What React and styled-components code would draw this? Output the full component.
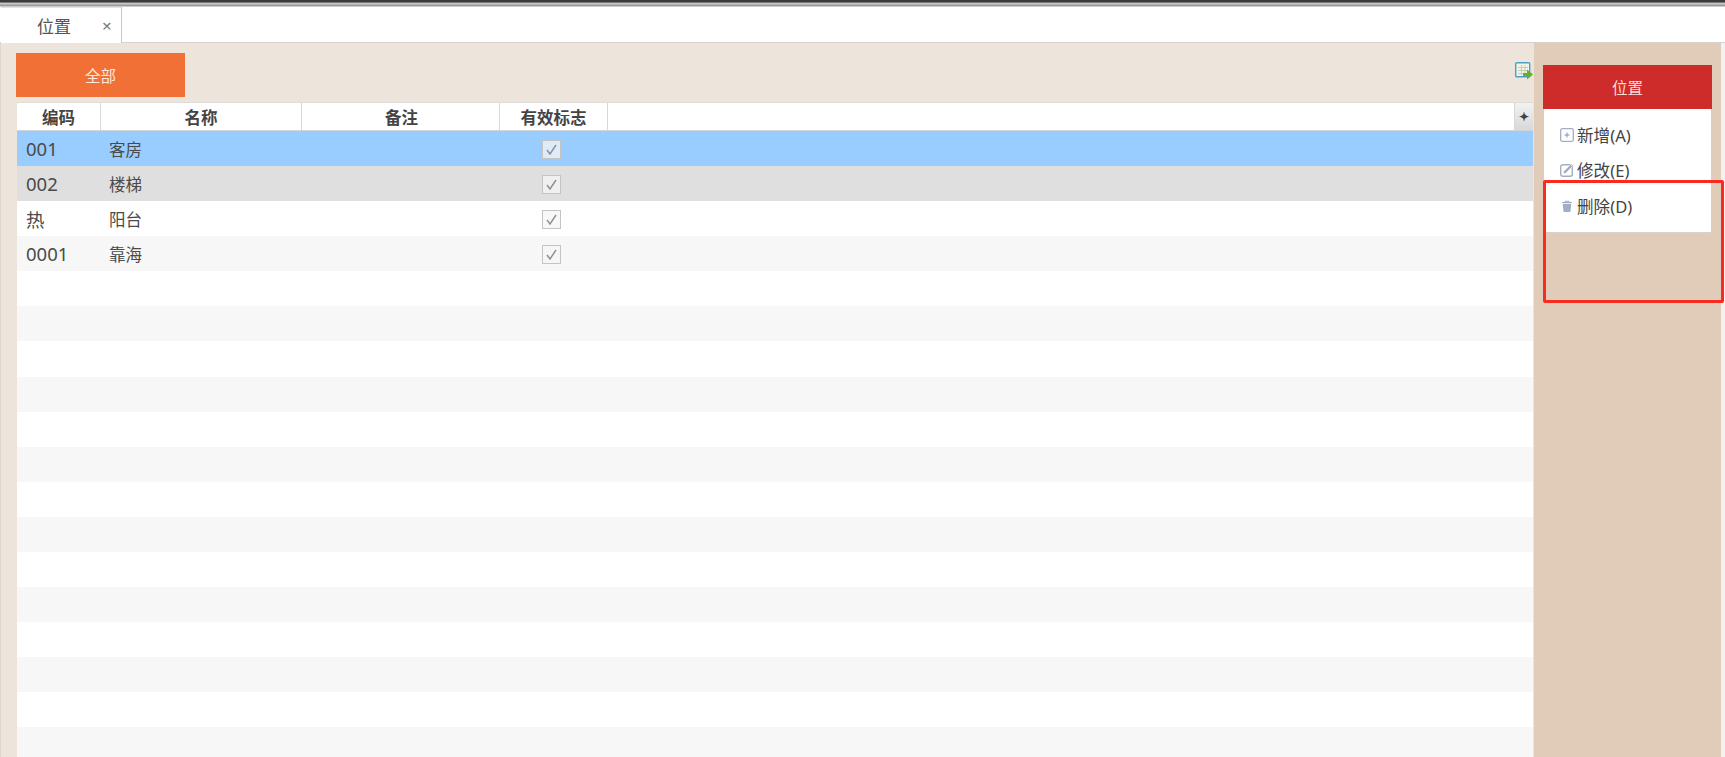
import styled, { createGlobalStyle } from "styled-components";

const GlobalStyle = createGlobalStyle`
  html, body { margin: 0; padding: 0; height: 100%; overflow: hidden; background: #fff; }
  body { font-family: "Noto Sans", "Noto Sans CJK SC", sans-serif; color: #444; }
`;

const Page = styled.div`
  width: 1725px;
  height: 757px;
  display: flex;
  flex-direction: column;
  overflow: hidden;
`;

const TopEdge = styled.div`
  height: 7px;
  flex: none;
  background: linear-gradient(#3c3c3c 0, #3c3c3c 2px, #b8b8b8 3px, #d8d8d8 4px, #8e8e8e 5px, #a8a8a8 6px, #f0f0f0 7px);
`;

const TabBar = styled.div`
  height: 36px;
  flex: none;
  display: flex;
  box-sizing: border-box;
  border-bottom: 1px solid #d6d2ce;
  padding-left: 1px;
`;

const Tab = styled.div`
  width: 121px;
  height: 36px;
  box-sizing: border-box;
  border-right: 1px solid #c8c8c8;
  border-top: 1px solid #e2e2e2;
  background: #fff;
  display: flex;
  align-items: center;
  font-size: 17px;
  color: #555;
  padding-left: 36px;
`;

const TabClose = styled.span`
  margin-left: 31px;
  font-size: 17px;
  color: #777;
`;

const Body = styled.div`
  flex: 1;
  display: flex;
  min-height: 0;
  background: #eff3f4;
`;

const Main = styled.div`
  width: 1534px;
  flex: none;
  box-sizing: border-box;
  background: #ede4dc;
  border-left: 1px solid #dcd6d2;
  padding: 10px 1px 0 15px;
  display: flex;
  flex-direction: column;
`;

const FilterRow = styled.div`
  display: flex;
  justify-content: space-between;
  height: 49px;
  flex: none;
`;

const AllButton = styled.div`
  width: 169px;
  height: 44px;
  background: #f07036;
  color: #ffe9dc;
  font-size: 15.5px;
  display: flex;
  align-items: center;
  justify-content: center;
`;

const ExportIcon = styled.svg`
  width: 18px;
  height: 18px;
  margin: 9px 0 0 0;
`;

const Table = styled.div`
  flex: 1;
  margin-left: 1px;
  display: flex;
  flex-direction: column;
  min-height: 0;
  overflow: hidden;
`;

const COLUMNS = "84px 201px 198px 108px 1fr";

const HeaderRow = styled.div`
  height: 29px;
  flex: none;
  display: grid;
  grid-template-columns: ${COLUMNS} 18px;
  box-sizing: border-box;
  background: #fff;
  border-bottom: 1px solid #d4d4d4;
  border-top: 1px solid #dedbd8;
`;

const HeaderCell = styled.div`
  box-sizing: border-box;
  border-right: 1px solid #d8d8d8;
  display: flex;
  align-items: center;
  justify-content: center;
  font-size: 16.5px;
  font-weight: 700;
  color: #444;
  padding-left: ${(p) => (p.$nudge ? "2px" : "0")};
`;

const PlusCell = styled.div`
  background: linear-gradient(#f2f2f2, #d8d8d8);
  display: flex;
  align-items: center;
  justify-content: center;
  font-size: 12px;
  font-weight: 700;
  color: #444;
`;

const ROW_COLORS = { selected: "#99ccff", hover: "#dfdfdf", odd: "#ffffff", even: "#f7f7f7" };

const Row = styled.div`
  height: 35.08px;
  flex: none;
  display: grid;
  grid-template-columns: ${COLUMNS};
  background: ${(p) => ROW_COLORS[p.$kind]};
  font-size: 16.5px;
  color: #4a4a4a;
`;

const CodeCell = styled.div`
  display: flex;
  align-items: center;
  padding-left: 9px;
  font-size: 18.5px;
`;

const NameCell = styled.div`
  display: flex;
  align-items: center;
  padding-left: 8px;
`;

const CheckCell = styled.div`
  display: flex;
  align-items: center;
  justify-content: center;
  padding: 2px 5px 0 0;
`;

const CheckBox = styled.svg`
  width: 19px;
  height: 19px;
`;

const Side = styled.div`
  width: 187px;
  flex: none;
  box-sizing: border-box;
  background: #e0ccb9;
  padding: 22px 0 0 9px;
  position: relative;
`;

const SideHeader = styled.div`
  width: 169px;
  height: 44px;
  background: #cd2c2a;
  color: #ffdcd6;
  font-size: 15.5px;
  display: flex;
  align-items: center;
  justify-content: center;
`;

const Menu = styled.div`
  width: 167px;
  margin-left: 1px;
  box-sizing: border-box;
  height: 124px;
  background: #fff;
  border-bottom: 1px solid #d8d2cc;
  padding-top: 8px;
`;

const MenuItem = styled.div`
  height: 35.5px;
  display: flex;
  align-items: center;
  padding-left: 16px;
  gap: 3px;
  font-size: 16.6px;
  color: #444;
`;

const MenuIcon = styled.svg`
  width: 14px;
  height: 14px;
  flex: none;
`;

const RedMark = styled.div`
  position: absolute;
  left: 9px;
  top: 137px;
  width: 181px;
  height: 123px;
  box-sizing: border-box;
  border: 3px solid #fa2a1e;
  border-radius: 2px;
  pointer-events: none;
`;

const rows = [
  { code: "001", name: "客房", kind: "selected" },
  { code: "002", name: "楼梯", kind: "hover" },
  { code: "热", name: "阳台", kind: "odd" },
  { code: "0001", name: "靠海", kind: "even" },
];

const emptyRows = Array.from({ length: 14 }, (_, i) => (i % 2 === 0 ? "odd" : "even"));

const Check = () => (
  <CheckBox viewBox="0 0 19 19">
    <rect x="0.5" y="0.5" width="18" height="18" fill="#f6f6f6" fillOpacity="0.75" stroke="#c4c4c4" />
    <path d="M5 10l3 4 6-9" fill="none" stroke="#8e8e8e" strokeWidth="1.4" />
  </CheckBox>
);

export default function App() {
  return (
    <Page>
      <GlobalStyle />
      <TopEdge />
      <TabBar>
        <Tab>
          位置
          <TabClose>×</TabClose>
        </Tab>
      </TabBar>
      <Body>
        <Main>
          <FilterRow>
            <AllButton>全部</AllButton>
            <ExportIcon viewBox="0 0 18 18">
              <rect x="0.7" y="0.7" width="14" height="14" rx="1" fill="#eef5e8" stroke="#4f9fc4" strokeWidth="1.4" />
              <path d="M3 5.500h10M3 8.500h10M3 11.500h10M6.500 3v10M10 3v10" stroke="#c9cfa8" strokeWidth="1" />
              <path d="M8 11h4V7.500l6 5-6 5V14H8z" fill="#62b02c" />
            </ExportIcon>
          </FilterRow>
          <Table>
            <HeaderRow>
              <HeaderCell>编码</HeaderCell>
              <HeaderCell>名称</HeaderCell>
              <HeaderCell $nudge>备注</HeaderCell>
              <HeaderCell>有效标志</HeaderCell>
              <HeaderCell />
              <PlusCell>✦</PlusCell>
            </HeaderRow>
            {rows.map((r) => (
              <Row key={r.code} $kind={r.kind}>
                <CodeCell>{r.code}</CodeCell>
                <NameCell>{r.name}</NameCell>
                <div />
                <CheckCell>
                  <Check />
                </CheckCell>
              </Row>
            ))}
            {emptyRows.map((kind, i) => (
              <Row key={i} $kind={kind} />
            ))}
          </Table>
        </Main>
        <Side>
          <SideHeader>位置</SideHeader>
          <Menu>
            <MenuItem>
              <MenuIcon viewBox="0 0 14 14">
                <rect x="0.700" y="0.700" width="12.600" height="12.600" rx="1.500" fill="none" stroke="#a3aec4" strokeWidth="1.300" />
                <path d="M7 4.500v5M4.500 7h5" stroke="#8894ac" />
              </MenuIcon>
              新增(A)
            </MenuItem>
            <MenuItem>
              <MenuIcon viewBox="0 0 14 14">
                <rect x="0.700" y="1.700" width="11.600" height="11.600" rx="2" fill="none" stroke="#a3aec4" strokeWidth="1.400" />
                <path d="M3 11l.7-2.800L10.500 1.400l2.100 2.100L5.800 10.300z" fill="#a3aec4" stroke="#fff" strokeWidth="0.700" />
              </MenuIcon>
              修改(E)
            </MenuItem>
            <MenuItem>
              <MenuIcon viewBox="0 0 14 14">
                <path d="M2 3.500h10M5.300 3.500V2.200h3.400v1.300" fill="none" stroke="#a3aec4" strokeWidth="1.100" />
                <path d="M2.800 4.700h8.400l-.6 7.300q-.1 1-1 1H4.400q-.9 0-1-1z" fill="#a3aec4" />
              </MenuIcon>
              删除(D)
            </MenuItem>
          </Menu>
          <RedMark />
        </Side>
      </Body>
    </Page>
  );
}
